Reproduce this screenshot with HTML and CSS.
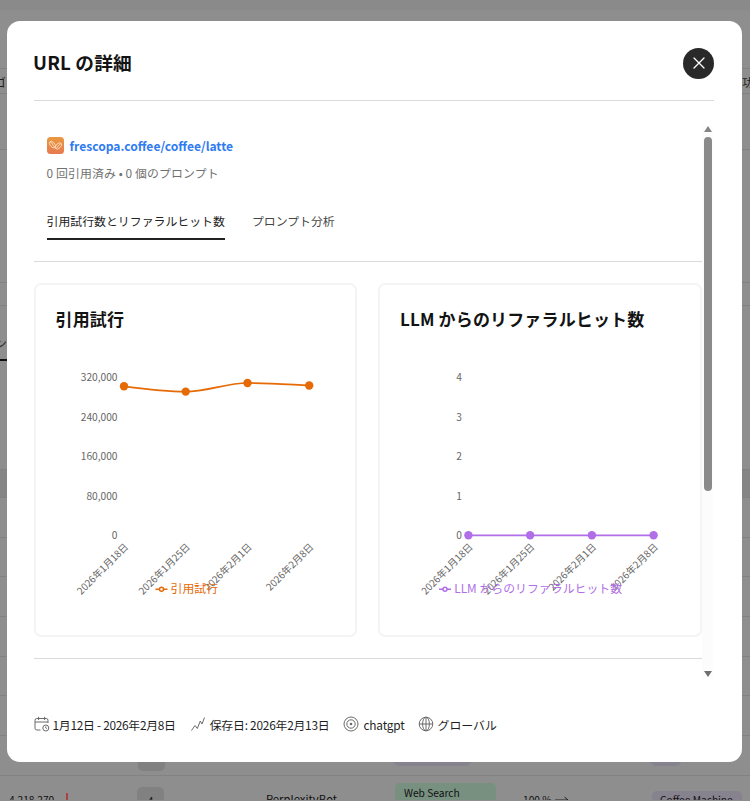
FILE: index.html
```html
<!DOCTYPE html>
<html lang="ja">
<head>
  <meta charset="UTF-8">
  <meta name="viewport" content="width=device-width, initial-scale=1.0">
  <title>URL の詳細</title>
  <link rel="stylesheet" href="styles.css">
</head>
<body>
  <!-- page behind the dialog -->
  <div class="page">
    <div class="row top"></div>
    <div class="row toolbar"></div>
    <div class="row labels"><span>ゴ</span><span>功</span></div>
    <div class="row gap-a"></div>
    <div class="row gap-b"></div>
    <div class="row gap-c"></div>
    <div class="row tabs-back"><span class="tab-back">ン</span></div>
    <div class="row gap-d"></div>
    <div class="row table-head"></div>
    <div class="row line"></div>
    <div class="row line"></div>
    <div class="row line"></div>
    <div class="row line"></div>
    <div class="row line"></div>
    <div class="row line"></div>
    <div class="row line cells">
      <span class="chip count"></span>
      <span class="chip violet wide"></span>
      <span class="chip violet"></span>
    </div>
    <div class="row last cells">
      <span class="hits">4,218,270</span>
      <span class="mark"></span>
      <span class="chip count">4</span>
      <span class="bot">PerplexityBot</span>
      <span class="chip green">Web Search</span>
      <span class="rate">100 % <svg width="16" height="8" viewBox="0 0 16 8"><path d="M1 4h13M10.5 1 14 4l-3.5 3"/></svg></span>
      <span class="chip violet">Coffee Machine</span>
    </div>
  </div>

  <div class="modal">
    <div class="modal-header">
      <h1>URL の詳細</h1>
      <button class="close">
        <svg width="14" height="14" viewBox="0 0 14 14"><path d="M2 2 12 12M12 2 2 12"/></svg>
      </button>
    </div>

    <div class="modal-body">
      <div class="content">
        <div class="url">
          <svg class="favicon" width="17" height="17" viewBox="0 0 17 17">
            <defs>
              <linearGradient id="fav" x1="0" y1="0" x2="0" y2="1">
                <stop offset="0" stop-color="#e89a40"/>
                <stop offset="1" stop-color="#e87850"/>
              </linearGradient>
            </defs>
            <rect width="17" height="17" rx="3.5" fill="url(#fav)"/>
            <g fill="none" stroke="#fbdcb8" stroke-width="0.9">
              <ellipse cx="5.4" cy="7.6" rx="2.3" ry="3.8" transform="rotate(-42 5.4 7.6)"/>
              <ellipse cx="11.4" cy="9" rx="2.3" ry="3.8" transform="rotate(48 11.4 9)"/>
              <path d="M3.2 5.2c2.8.4 1.8 3.6 4.5 4.8M14 6.8c-2.6.2-2 3.2-5 4.4"/>
            </g>
          </svg>
          <a class="link">frescopa.coffee/coffee/latte</a>
        </div>
        <div class="summary">0 回引用済み • 0 個のプロンプト</div>
        <div class="tabs">
          <div class="tab active">引用試行数とリファラルヒット数</div>
          <div class="tab">プロンプト分析</div>
        </div>

        <div class="cards">
          <div class="card">
            <h2>引用試行</h2>
            <svg class="chart" width="319" height="285" viewBox="0 0 319 285">
              <g class="y-axis">
                <text x="81.5" y="31.4">320,000</text>
                <text x="81.5" y="71">240,000</text>
                <text x="81.5" y="110.3">160,000</text>
                <text x="81.5" y="149.7">80,000</text>
                <text x="81.5" y="189">0</text>
              </g>
              <g class="x-axis">
                <text transform="translate(93 197.5) rotate(-45)">2026年1月18日</text>
                <text transform="translate(154.7 197.5) rotate(-45)">2026年1月25日</text>
                <text transform="translate(216.4 197.5) rotate(-45)">2026年2月1日</text>
                <text transform="translate(278.2 197.5) rotate(-45)">2026年2月8日</text>
              </g>
              <g class="orange">
                <path class="line-path" d="M88 36.3C108.6 39 129.1 41.6 149.7 41.6S190.8 33 211.5 33S252.6 34.5 273.2 35.5"/>
                <circle cx="88" cy="36.3" r="4.2"/>
                <circle cx="149.7" cy="41.6" r="4.2"/>
                <circle cx="211.5" cy="33" r="4.2"/>
                <circle cx="273.2" cy="35.5" r="4.2"/>
                <path class="key" d="M119.5 239.3h4M127.5 239.3h4"/>
                <circle class="key" cx="125.5" cy="239.3" r="2"/>
                <text x="134.5" y="243">引用試行</text>
              </g>
            </svg>
          </div>
          <div class="card">
            <h2>LLM からのリファラルヒット数</h2>
            <svg class="chart" width="319" height="285" viewBox="0 0 319 285">
              <g class="y-axis">
                <text x="82" y="31.4">4</text>
                <text x="82" y="71">3</text>
                <text x="82" y="110.3">2</text>
                <text x="82" y="149.7">1</text>
                <text x="82" y="189">0</text>
              </g>
              <g class="x-axis">
                <text transform="translate(93.4 197.5) rotate(-45)">2026年1月18日</text>
                <text transform="translate(155.1 197.5) rotate(-45)">2026年1月25日</text>
                <text transform="translate(216.9 197.5) rotate(-45)">2026年2月1日</text>
                <text transform="translate(278.6 197.5) rotate(-45)">2026年2月8日</text>
              </g>
              <g class="purple">
                <path class="line-path" d="M88.4 185.3H273.6"/>
                <circle cx="88.4" cy="185.3" r="4.2"/>
                <circle cx="150.1" cy="185.3" r="4.2"/>
                <circle cx="211.9" cy="185.3" r="4.2"/>
                <circle cx="273.6" cy="185.3" r="4.2"/>
                <path class="key" d="M59 239.3h4M67 239.3h4"/>
                <circle class="key" cx="65" cy="239.3" r="2"/>
                <text x="74.2" y="243">LLM からのリファラルヒット数</text>
              </g>
            </svg>
          </div>
        </div>
      </div>

      <div class="scrollbar">
        <div class="arrow up"></div>
        <div class="thumb"></div>
        <div class="arrow down"></div>
      </div>
    </div>

    <div class="modal-footer">
      <div class="info date">
        <svg width="16" height="16" viewBox="0 0 16 16">
          <path d="M6.5 14H2.8A1.8 1.8 0 0 1 1 12.2V4.3A1.8 1.8 0 0 1 2.8 2.5h9.4A1.8 1.8 0 0 1 14 4.3V7M1 6h13M4.6.8v3.2M10.6.8v3.2"/>
          <circle cx="11.8" cy="12" r="3"/>
          <path d="M11.8 10.5V12l1 .6"/>
        </svg>
        1月12日 - 2026年2月8日
      </div>
      <div class="info saved">
        <svg width="16" height="16" viewBox="0 0 16 16">
          <path d="M1.5 14.5 5 9.5l2.3 3L10.3 5l1.7 3L14.500 1.500"/>
        </svg>
        保存日: 2026年2月13日
      </div>
      <div class="info">
        <svg width="16" height="16" viewBox="0 0 16 16">
          <circle cx="8" cy="8" r="7"/>
          <circle cx="8" cy="8" r="4.2"/>
          <circle class="dot" cx="8" cy="8" r="1.3"/>
        </svg>
        chatgpt
      </div>
      <div class="info region">
        <svg width="16" height="16" viewBox="0 0 16 16">
          <circle cx="8" cy="8" r="6.8"/>
          <ellipse cx="8" cy="8" rx="3.4" ry="6.8"/>
          <path d="M8 1.2v13.6M1.2 8h13.6"/>
        </svg>
        グローバル
      </div>
    </div>
  </div>
</body>
</html>
```

FILE: styles.css
```css
* {
  box-sizing: border-box;
}
body {
  margin: 0;
  height: 801px;
  overflow: hidden;
  position: relative;
  background-color: #8e8e8e;
  font-family: "Noto Sans CJK JP", sans-serif;
  font-size: 11.9px;
  color: #292929;
}

/* background page */
.page {
  height: 800px;
  overflow: hidden;
}
.row {
  border-bottom: 1px solid #828282;
}
.top {
  height: 11px;
  background-color: #8a8a8a;
  border-color: #8d8d8d;
}
.toolbar {
  height: 58px;
}
.labels {
  height: 25px;
  display: flex;
  justify-content: space-between;
  align-items: center;
  margin: 0 -4px 0 -6px;
  color: #1c1c1c;
}
.gap-a {
  height: 56px;
}
.gap-b {
  height: 133px;
}
.gap-c {
  height: 23px;
}
.tabs-back {
  height: 56px;
  border: none;
}
.tab-back {
  display: inline-block;
  height: 55px;
  padding-top: 28px;
  margin-left: -5px;
  border-bottom: 2px solid #111;
}
.gap-d {
  height: 108px;
}
.table-head {
  height: 28px;
  background-color: #858585;
}
.line {
  height: 39.7px;
}
.last {
  height: 40px;
}
.cells {
  display: flex;
  align-items: flex-start;
  font-size: 10.2px;
  color: #111;
}
.chip {
  border-radius: 5px;
}
.count {
  width: 27px;
  height: 30px;
  margin: 5px 0 0 138px;
  background-color: #818181;
}
.violet {
  width: 30px;
  height: 27px;
  margin: 3px 0 0 180px;
  background-color: #86828e;
}
.violet.wide {
  width: 77px;
  margin-left: 229px;
}
.last .hits {
  width: 57px;
  margin: 16px 0 0 9px;
}
.mark {
  width: 2px;
  height: 8px;
  margin-top: 17px;
  background-color: #a44;
}
.last .count {
  margin: 11px 0 0 69px;
  padding-top: 6px;
  text-align: center;
}
.bot {
  width: 129px;
  margin: 15px 0 0 102px;
  font-size: 11.3px;
}
.green {
  width: 101px;
  height: 30px;
  padding: 2px 9px;
  margin-top: 7px;
  background-color: #779080;
}
.rate {
  width: 129px;
  margin: 16px 0 0 27px;
}
.rate svg {
  fill: none;
  stroke: #222;
}
.last .violet {
  width: 90px;
  margin: 15px 0 0;
  padding: 1px 8px;
  white-space: nowrap;
}

/* dialog */
.modal {
  position: absolute;
  left: 6.5px;
  top: 21px;
  width: 735px;
  height: 741px;
  padding: 0 27.5px 0 27px;
  display: flex;
  flex-direction: column;
  background-color: #fff;
  border-radius: 13px;
}
.modal-header {
  height: 80px;
  padding-top: 5px;
  display: flex;
  justify-content: space-between;
  align-items: center;
  border-bottom: 1.5px solid #dadada;
}
h1 {
  margin: -4px 0 0 -0.5px;
  font-size: 18.7px;
  font-weight: bold;
  letter-spacing: 0.15px;
  color: #131313;
}
.close {
  width: 31px;
  height: 31px;
  padding: 0;
  display: flex;
  justify-content: center;
  align-items: center;
  border: none;
  border-radius: 50%;
  background-color: #292929;
}
.close svg {
  fill: none;
  stroke: #fff;
  stroke-width: 1.3;
  stroke-linecap: round;
}
.modal-body {
  height: 582px;
  display: flex;
}
.content {
  width: 668.5px;
  padding-top: 34px;
}
.url {
  height: 20px;
  margin-left: 13px;
  display: flex;
  align-items: center;
  gap: 6px;
}
.link {
  font-size: 12.1px;
  font-weight: bold;
  color: #2f7bf0;
}
.summary {
  margin: 8px 0 0 13px;
  line-height: 20px;
  letter-spacing: 0.1px;
  color: #717171;
}
.tabs {
  margin-top: 28px;
  padding: 0 0 21px 13px;
  display: flex;
  gap: 27px;
  border-bottom: 1.5px solid #dadada;
}
.tab {
  height: 29px;
  line-height: 20px;
  color: #464646;
}
.tab.active {
  color: #222;
  border-bottom: 2px solid #222;
}
.cards {
  padding: 21px 0;
  display: flex;
  gap: 21px;
  border-bottom: 1.5px solid #dadada;
}
.card {
  width: 323.5px;
  height: 354px;
  border: 2px solid #f4f4f4;
  border-radius: 7px;
}
h2 {
  height: 65px;
  margin: 0;
  padding: 20px 20px 0;
  font-size: 17px;
  line-height: 28px;
  letter-spacing: 0.15px;
  color: #131313;
}
.chart {
  display: block;
}
.y-axis text,
.x-axis text {
  font-size: 10.2px;
  text-anchor: end;
  fill: #666;
}
.x-axis text {
  font-size: 9.8px;
}
.orange {
  fill: #e66a05;
  stroke: #e66a05;
}
.purple {
  fill: #b06fe8;
  stroke: #b06fe8;
}
.chart circle,
.orange text,
.purple text {
  stroke: none;
}
.line-path {
  fill: none;
  stroke-width: 1.7;
}
.chart .key {
  fill: none;
  stroke: #e66a05;
  stroke-width: 1.5;
}
.chart .purple .key {
  stroke: #b06fe8;
}

.scrollbar {
  width: 11px;
  height: 553px;
  margin-top: 25px;
  display: flex;
  flex-direction: column;
  align-items: center;
  background-color: #fcfcfc;
}
.arrow {
  border: 4px solid transparent;
}
.up {
  border-top: none;
  border-bottom: 6px solid #858585;
}
.thumb {
  width: 8px;
  height: 354px;
  margin: 5px 0 180px;
  border-radius: 4px;
  background-color: #8a8a8a;
}
.down {
  border-bottom: none;
  border-top: 6px solid #6f6f6f;
}

.modal-footer {
  height: 42px;
  margin-top: 20px;
  display: flex;
  align-items: center;
  gap: 14px;
}
.info {
  display: flex;
  align-items: center;
  gap: 4px;
  letter-spacing: -0.2px;
  white-space: nowrap;
  color: #1f1f1f;
}
.info.date {
  gap: 3px;
  letter-spacing: -0.3px;
}
.info.saved {
  letter-spacing: -0.25px;
}
.info.region {
  margin-left: -1px;
  letter-spacing: 0;
}
.info svg {
  fill: none;
  stroke: #6b6b6b;
  stroke-width: 1;
}
.info .dot {
  fill: #6b6b6b;
  stroke: none;
}
```
